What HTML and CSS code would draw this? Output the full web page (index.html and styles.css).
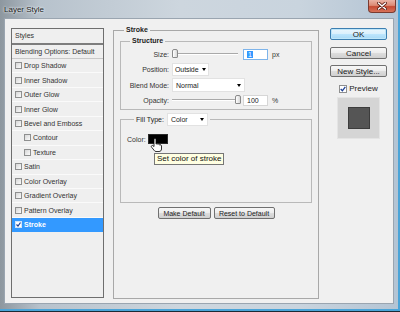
FILE: index.html
```html
<!DOCTYPE html>
<html>
<head>
<meta charset="utf-8">
<link rel="stylesheet" href="styles.css">
</head>
<body>
<div class="win">
  <div class="titlebar">
    <span class="title">Layer Style</span>
    <div class="close">
      <svg width="10" height="8" viewBox="0 0 10 8"><path d="M1.5 1L8.5 7M8.5 1L1.5 7" stroke="#5a1a10" stroke-width="3" stroke-linecap="round"/><path d="M1.5 1L8.5 7M8.5 1L1.5 7" stroke="#fff" stroke-width="1.6" stroke-linecap="round"/></svg>
    </div>
  </div>
  <div class="client">
    <div class="styles-list">
      <div class="list-head">Styles</div>
      <div class="blend">Blending Options: Default</div>
      <div class="item"><span class="cb"></span>Drop Shadow</div>
      <div class="item"><span class="cb"></span>Inner Shadow</div>
      <div class="item"><span class="cb"></span>Outer Glow</div>
      <div class="item"><span class="cb"></span>Inner Glow</div>
      <div class="item"><span class="cb"></span>Bevel and Emboss</div>
      <div class="item sub"><span class="cb"></span>Contour</div>
      <div class="item sub"><span class="cb"></span>Texture</div>
      <div class="item"><span class="cb"></span>Satin</div>
      <div class="item"><span class="cb"></span>Color Overlay</div>
      <div class="item"><span class="cb"></span>Gradient Overlay</div>
      <div class="item"><span class="cb"></span>Pattern Overlay</div>
      <div class="item selected"><span class="cb checked"><svg width="5" height="5" viewBox="0 0 5 5"><path d="M0.5 2.5L2 4L4.5 0.5" fill="none" stroke="#1c3f94" stroke-width="1.2"/></svg></span>Stroke</div>
    </div>

    <fieldset class="grp stroke">
      <legend class="lg-stroke">Stroke</legend>
      <fieldset class="grp structure">
        <legend class="lg-structure">Structure</legend>
        <div class="form">
          <span class="lbl">Size:</span>
          <div class="ctl">
            <div class="slider"><span class="thumb"></span></div>
            <span class="num focus"><span class="sel">1</span></span>
            <span class="unit">px</span>
          </div>
          <span class="lbl">Position:</span>
          <div class="ctl"><span class="dd dd-pos">Outside<i class="arrow"></i></span></div>
          <span class="lbl">Blend Mode:</span>
          <div class="ctl"><span class="dd dd-blend">Normal<i class="arrow"></i></span></div>
          <span class="lbl">Opacity:</span>
          <div class="ctl">
            <div class="slider"><span class="thumb thumb-end"></span></div>
            <span class="num">100</span>
            <span class="unit">%</span>
          </div>
        </div>
      </fieldset>
      <fieldset class="grp fill">
        <legend class="lg-fill"><span>Fill Type:</span><span class="dd dd-fill">Color<i class="arrow"></i></span></legend>
        <div class="color-row">
          <span>Color:</span>
          <span class="swatch"></span>
          <svg class="hand" width="12" height="14" viewBox="0 0 12 14"><path d="M4 1.5a1 1 0 0 1 2 0V6h.3a1 1 0 0 1 1.7 0v.4a1 1 0 0 1 1.8 0V7.2a1 1 0 0 1 1.7.7V11c0 1.5-1 2.5-2.5 2.5H6C5 13.5 4.6 13 4.1 12.3L1.6 9.2a1 1 0 0 1 1.5-1.4L4 8.6z" fill="#fff" stroke="#000" stroke-width="0.8"/></svg>
          <div class="tip">Set color of stroke</div>
        </div>
      </fieldset>
      <div class="btnrow">
        <span class="btn b-make">Make Default</span>
        <span class="btn b-reset">Reset to Default</span>
      </div>
    </fieldset>

    <div class="side">
      <span class="btn big ok">OK</span>
      <span class="btn big cancel">Cancel</span>
      <span class="btn big newstyle">New Style...</span>
      <div class="preview-row">
        <span class="cb pcb"><svg width="6" height="6" viewBox="0 0 6 6"><path d="M0.7 3L2.4 4.8L5.3 0.8" fill="none" stroke="#1c3f94" stroke-width="1.3"/></svg></span>
        <span>Preview</span>
      </div>
      <div class="preview-box"><span class="preview-sq"></span></div>
    </div>
  </div>
</div>
</body>
</html>
```

FILE: styles.css
```css
* { box-sizing: border-box; }

body {
  margin: 0;
  width: 400px;
  height: 312px;
  overflow: hidden;
  font-family: "Liberation Sans", Arial, sans-serif;
  font-size: 7px;
  color: #222;
  background: #111;
}

.win {
  width: 400px;
  height: 312px;
  display: flex;
  flex-direction: column;
  background: linear-gradient(to right, #8d979f, #b7c2cc 10%, #cdd6de 45%, #c9d4de 75%, #b3c4d4);
  box-shadow: inset -2px -2px 0 #4aa4d8;
  border-bottom: 1px solid #1c2a35;
}

.titlebar {
  height: 18px;
  flex: none;
  display: flex;
  justify-content: space-between;
  align-items: flex-start;
  padding: 0 4px 0 4px;
}

.title {
  font-size: 8px;
  line-height: 18px;
  padding-top: 1px;
  color: #1b1b1b;
  text-shadow: 0 0 3px #eef3f7, 0 0 2px #eef3f7;
}

.close {
  width: 28px;
  height: 13px;
  border: 1px solid #7a3b30;
  border-top: none;
  border-radius: 0 0 4px 4px;
  background: linear-gradient(#eab3a5, #dc8a74 45%, #c64a32 55%, #d7735a);
  display: flex;
  align-items: center;
  justify-content: center;
}

.client {
  flex: 1;
  margin: 0 6px 7px 4px;
  background: #f0f0f0;
  border: 1px solid #9aa5b0;
  display: flex;
  align-items: flex-start;
  padding: 9px 0 0 6px;
}

/* Styles list */
.styles-list {
  width: 93px;
  height: 270px;
  flex: none;
  border: 1px solid #6e6e6e;
  background: #efefef;
  color: #333;
}

.list-head {
  height: 16px;
  line-height: 14px;
  padding-left: 3px;
  border-bottom: 2px solid #7d7d7d;
}

.blend {
  height: 14px;
  line-height: 13px;
  padding-left: 3px;
  border-bottom: 1px solid #c9c9c9;
}

.item {
  height: 14.45px;
  display: flex;
  align-items: center;
  padding-left: 3px;
  border-bottom: 1px solid #fafafa;
}

.item.sub { padding-left: 12px; }

.cb {
  width: 7px;
  height: 7px;
  flex: none;
  margin-right: 2px;
  border: 1px solid #8e8f8f;
  background: linear-gradient(135deg, #d6d6d6, #fbfbfb);
  display: flex;
  align-items: center;
  justify-content: center;
}

.item.selected {
  background: #3399ff;
  color: #fff;
  font-weight: bold;
  border-bottom-color: #3399ff;
}

.cb.checked {
  background: #fff;
  border-color: #d0e4f8;
}

/* Group boxes */
.grp {
  margin: 0;
  min-width: 0;
  border: 1px solid #b9b9b9;
}

.grp > legend {
  padding: 0 2px;
  font-weight: bold;
  line-height: 8px;
  color: #222;
}

.stroke {
  width: 206px;
  height: 273px;
  margin: -2px 0 0 9px;
  padding: 3px 6px 0 6px;
  border-color: #a8a8a8;
  flex: none;
}

.lg-stroke { margin-left: 4px; }

.structure {
  padding: 3px 0 3px 0;
}

.lg-structure { margin-left: 9px; }

.form {
  display: grid;
  grid-template-columns: 48px 1fr;
  grid-template-rows: 12px 14px 14px 12px;
  column-gap: 3px;
  row-gap: 2px;
}

.lbl {
  text-align: right;
  align-self: center;
  color: #333;
}

.ctl {
  display: flex;
  align-items: center;
}

.slider {
  position: relative;
  width: 69px;
  height: 12px;
  margin-right: 2px;
  background:
    linear-gradient(#a9a9a9, #a9a9a9) 0 5px / 66px 1px no-repeat,
    linear-gradient(#ffffff, #ffffff) 0 6px / 66px 1px no-repeat;
}

.thumb {
  position: absolute;
  left: 0;
  top: 1px;
  width: 6px;
  height: 9px;
  border: 1px solid #8a8a8a;
  border-radius: 2px 2px 1px 1px;
  background: linear-gradient(to right, #ffffff, #d8d8d8);
}

.thumb-end { left: 63px; }

.num {
  width: 25px;
  height: 11px;
  background: #fff;
  border: 1px solid #d6d6d6;
  line-height: 9px;
  padding-left: 3px;
  color: #222;
}

.num.focus { border-color: #7eb4ea; }

.sel {
  background: #3399ff;
  color: #fff;
  padding: 0 1px;
}

.unit {
  margin-left: 4px;
  color: #333;
}

.dd {
  display: flex;
  align-items: center;
  justify-content: space-between;
  background: #fff;
  border: 1px solid #e2e2e2;
  padding: 0 3px 0 3px;
  color: #222;
  font-weight: normal;
}

.dd-pos { width: 37px; height: 13px; padding: 0 2px 0 2px; letter-spacing: -0.1px; }
.dd-blend { width: 73px; height: 14px; }
.dd-fill { width: 41px; height: 13px; margin-left: 3px; }

.arrow {
  width: 0;
  height: 0;
  border-left: 2.5px solid transparent;
  border-right: 2.5px solid transparent;
  border-top: 3px solid #000;
}

.fill {
  margin-top: 3px;
  height: 90px;
  padding: 0 6px;
}

.lg-fill {
  margin-left: 7px;
  display: flex;
  align-items: center;
  font-weight: normal !important;
  line-height: 13px !important;
}

.color-row {
  position: relative;
  margin-top: 8px;
  display: flex;
  align-items: center;
  height: 10px;
  color: #333;
}

.swatch {
  width: 20px;
  height: 10px;
  margin-left: 2px;
  background: #000;
  border: 1px solid #2a2a2a;
}

.hand {
  position: absolute;
  left: 23px;
  top: 4px;
}

.tip {
  position: absolute;
  left: 27px;
  top: 19px;
  height: 12px;
  padding: 0 2px;
  white-space: nowrap;
  background: #ffffe1;
  border: 1px solid #767676;
  font-size: 8px;
  line-height: 10px;
  color: #111;
}

.btnrow {
  margin-top: 4px;
  display: flex;
  justify-content: center;
  gap: 3px;
}

.btn {
  display: flex;
  align-items: center;
  justify-content: center;
  height: 12px;
  border: 1px solid #707070;
  border-radius: 2px;
  background: linear-gradient(#f7f7f7, #ececec 50%, #dddddd 50%, #d0d0d0);
  color: #222;
  white-space: nowrap;
}

.b-make { width: 53px; }
.b-reset { width: 61px; }

/* Right column */
.side {
  width: 57px;
  margin-left: 11px;
  display: flex;
  flex-direction: column;
  align-items: center;
  flex: none;
}

.btn.big {
  width: 57px;
  font-size: 8px;
}

.ok {
  border-color: #3c7fb1;
  background: linear-gradient(#eaf6fd, #d9f0fc 50%, #bee6fd 50%, #a7d9f5);
  box-shadow: inset 0 0 0 1px #bfe6f9;
}

.cancel { margin-top: 7px; }
.newstyle { margin-top: 6px; }

.preview-row {
  margin-top: 7px;
  height: 9px;
  display: flex;
  align-items: center;
  font-size: 8px;
  color: #222;
}

.pcb {
  width: 8px;
  height: 8px;
  background: #fff;
  border-color: #8e8f8f;
}

.preview-box {
  margin-top: 4px;
  width: 43px;
  height: 42px;
  background: #d5d5d5;
  border: 1px solid #e4e4e4;
  display: flex;
  align-items: center;
  justify-content: center;
}

.preview-sq {
  width: 22px;
  height: 22px;
  background: #555;
  border: 1px solid #3c3c3c;
}
```
